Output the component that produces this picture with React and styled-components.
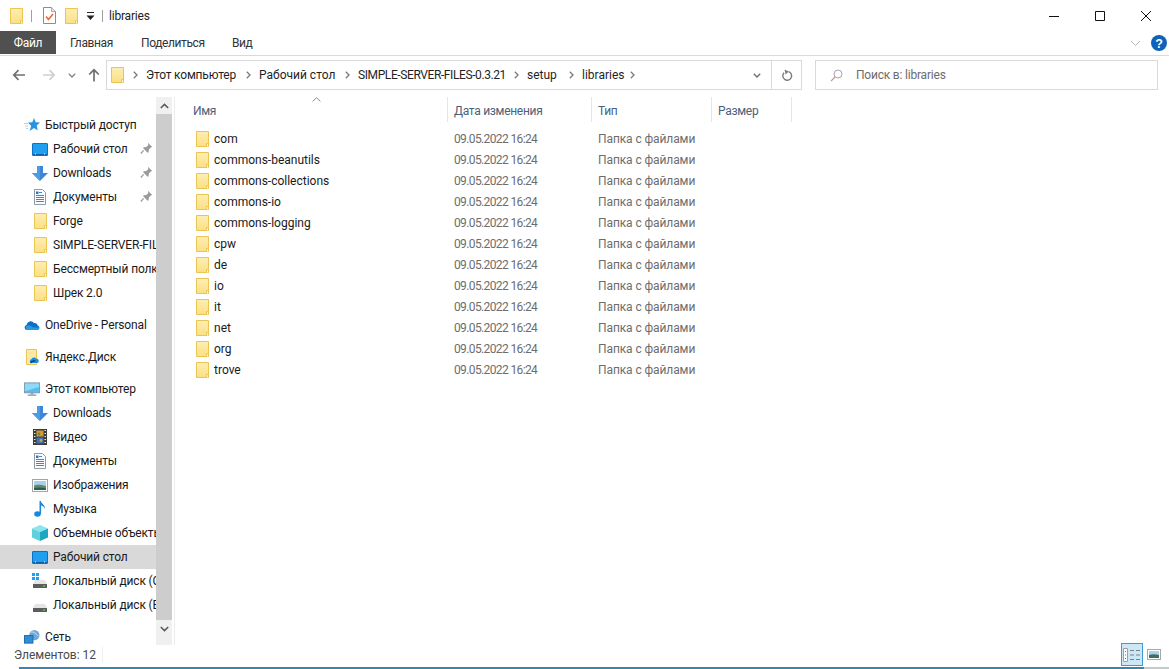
import React from "react";
import styled, { createGlobalStyle } from "styled-components";

const GlobalStyle = createGlobalStyle`
  html, body {
    margin: 0;
    padding: 0;
    background: #fff;
    overflow: hidden;
  }
  body {
    font-family: Roboto, "Open Sans", "Liberation Sans", sans-serif;
    font-size: 12px;
    color: #1a1a1a;
  }
`;

const Window = styled.div`
  width: 1169px;
  height: 669px;
  display: flex;
  flex-direction: column;
  overflow: hidden;
`;

const TitleBar = styled.div`
  height: 31px;
  display: flex;
  align-items: center;
  padding-left: 8px;
`;

const QuickItem = styled.div`
  display: flex;
  margin-left: ${(p) => p.$ml || 0}px;
`;

const QuickDivider = styled.div`
  width: 1px;
  height: 12px;
  background: #a0a0a0;
  margin-left: 7px;
`;

const TitleText = styled.div`
  flex: 1;
  margin-left: 6px;
  letter-spacing: -0.2px;
  color: #222;
`;

const WindowButton = styled.div`
  width: 46px;
  height: 31px;
  display: flex;
  align-items: center;
  justify-content: center;
`;

const Ribbon = styled.div`
  height: 24px;
  display: flex;
  align-items: stretch;
  border-bottom: 1px solid #dadada;
`;

const FileTab = styled.div`
  width: 56px;
  height: 23px;
  background: #505050;
  color: #fff;
  letter-spacing: -0.3px;
  display: flex;
  align-items: center;
  justify-content: center;
`;

const RibbonTab = styled.div`
  display: flex;
  align-items: center;
  margin-left: ${(p) => p.$gap}px;
  width: ${(p) => p.$w}px;
  color: #333;
  letter-spacing: -0.4px;
  white-space: nowrap;
`;

const RibbonEnd = styled.div`
  margin-left: auto;
  padding-right: 2px;
  display: flex;
  align-items: center;
  gap: 10px;
`;

const AddressRow = styled.div`
  height: 41px;
  box-sizing: border-box;
  padding-top: 4px;
  flex: none;
  display: flex;
  align-items: flex-start;
`;

const NavGroup = styled.div`
  width: 106px;
  height: 30px;
  display: flex;
  align-items: center;
  padding-left: 12px;
  box-sizing: border-box;
`;

const NavSlot = styled.div`
  width: ${(p) => p.$w}px;
  display: flex;
  justify-content: center;
`;

const AddressBox = styled.div`
  width: 696px;
  height: 30px;
  box-sizing: border-box;
  border: 1px solid #d9d9d9;
  display: flex;
  align-items: center;
  padding-left: 2px;
`;

const Crumb = styled.span`
  color: #1f1f1f;
  white-space: nowrap;
  width: ${(p) => p.$w}px;
  letter-spacing: ${(p) => p.$spacing}px;
`;

const CrumbArrow = styled.span`
  display: flex;
  width: ${(p) => p.$w || 21}px;
  justify-content: center;
`;

const AddressSpacer = styled.div`
  flex: 1;
`;

const AddressButton = styled.div`
  width: 29px;
  height: 28px;
  display: flex;
  align-items: center;
  justify-content: center;
  border-left: ${(p) => (p.$divided ? "1px solid #d9d9d9" : "none")};
`;

const SearchBox = styled.div`
  width: 343px;
  height: 30px;
  margin-left: 13px;
  box-sizing: border-box;
  border: 1px solid #d9d9d9;
  display: flex;
  align-items: center;
  gap: 13px;
  padding-left: 14px;
  color: #6d6d6d;
  letter-spacing: -0.2px;
`;

const Main = styled.div`
  height: 548px;
  display: flex;
  flex: none;
`;

const Sidebar = styled.div`
  width: 175px;
  flex: none;
  display: flex;
  box-sizing: border-box;
  border-right: 1px solid #ececec;
  overflow: hidden;
`;

const NavList = styled.div`
  width: 156px;
  flex: none;
  padding-top: 16px;
  overflow: hidden;
`;

const NavSection = styled.div`
  margin-bottom: 8px;
`;

const NavRow = styled.div`
  height: 24px;
  display: flex;
  align-items: center;
  position: relative;
  padding-left: ${(p) => (p.$sub ? 32 : 24)}px;
  background: ${(p) => (p.$selected ? "#d9d9d9" : "transparent")};
  white-space: nowrap;
  overflow: hidden;
`;

const NavIcon = styled.span`
  width: 16px;
  height: 16px;
  flex: none;
  margin-right: 5px;
  display: flex;
  align-items: center;
  justify-content: center;
`;

const NavText = styled.span`
  color: #1a1a1a;
  letter-spacing: -0.15px;
`;

const PinSlot = styled.span`
  position: absolute;
  left: 140px;
  top: 5px;
  display: flex;
`;

const Scrollbar = styled.div`
  width: 16px;
  height: 548px;
  flex: none;
  background: #f0f0f0;
  display: flex;
  flex-direction: column;
`;

const ScrollButton = styled.div`
  height: 17px;
  flex: none;
  display: flex;
  align-items: center;
  justify-content: center;
`;

const ScrollThumb = styled.div`
  height: 506px;
  flex: none;
  background: #cdcdcd;
`;

const Content = styled.div`
  flex: 1;
  padding-left: 12px;
`;

const HeaderRow = styled.div`
  height: 25px;
  display: flex;
  position: relative;
`;

const SortMark = styled.span`
  position: absolute;
  left: 125px;
  top: 0;
  display: flex;
`;

const HeaderCell = styled.div`
  width: ${(p) => p.$w}px;
  height: 25px;
  box-sizing: border-box;
  padding: 2px 0 0 6px;
  display: flex;
  align-items: center;
  color: #4c607a;
  letter-spacing: -0.3px;
  border-right: 1px solid #e5e5e5;
`;

const FileList = styled.div`
  padding-top: 6px;
`;

const FileRow = styled.div`
  height: 21px;
  display: flex;
  align-items: center;
`;

const NameCell = styled.div`
  width: 261px;
  display: flex;
  align-items: center;
  padding-left: 7px;
  box-sizing: border-box;
  color: #1a1a1a;
  gap: 4px;
`;

const DetailCell = styled.div`
  width: ${(p) => p.$w}px;
  padding-left: 6px;
  box-sizing: border-box;
  color: #6d6d6d;
  letter-spacing: ${(p) => p.$spacing}px;
`;

const StatusBar = styled.div`
  height: 22px;
  flex: none;
  display: flex;
  align-items: center;
  position: relative;
  top: -1px;
`;

const StatusText = styled.div`
  width: 88px;
  padding-left: 14px;
  color: #4a4a4a;
  height: 16px;
  line-height: 16px;
  border-right: 1px solid #eee;
`;

const ViewButtons = styled.div`
  margin: -1px 0 0 auto;
  display: flex;
  align-items: center;
  padding-right: 8px;
  gap: 4px;
`;

const ViewButton = styled.div`
  width: ${(p) => (p.$active ? 22 : 14)}px;
  height: 23px;
  box-sizing: border-box;
  display: flex;
  align-items: center;
  justify-content: center;
  background: ${(p) => (p.$active ? "#cce8f7" : "transparent")};
  border: ${(p) => (p.$active ? "1px solid #3b9ad8" : "none")};
`;

const TaskStrip = styled.div`
  height: 2px;
  flex: none;
  display: flex;
  margin-left: 19px;
`;

const TaskBlue = styled.div`
  flex: 1;
  background: #3a84ad;
`;

const TaskGray = styled.div`
  width: 25px;
  background: #c8c8c8;
`;

const FolderIcon = () => (
  <svg width="16" height="16" viewBox="0 0 16 16">
    <defs>
      <linearGradient id="fold" x1="0" y1="0" x2="0" y2="1">
        <stop offset="0" stopColor="#fdeeb4" />
        <stop offset="1" stopColor="#fbdf83" />
      </linearGradient>
    </defs>
    <path d="M2.5.5h12v15h-12z" fill="url(#fold)" stroke="#ecc451" />
    <path d="M12.5 15.5v-3h2v3" fill="#fff6d6" stroke="#ecc451" />
  </svg>
);

const ChecklistIcon = () => (
  <svg width="13" height="17" viewBox="0 0 13 17">
    <path d="M.5.5h8l4 4v12H.5z" fill="#fff" stroke="#8c8c8c" />
    <path d="M8.5.5v4h4" fill="#e8e8e8" stroke="#a8a8a8" />
    <path d="M3 9.5l2.5 3L10 7" fill="none" stroke="#ee6a32" strokeWidth="1.6" />
  </svg>
);

const QuickDropdown = () => (
  <svg width="9" height="10" viewBox="0 0 9 10">
    <path d="M1 1.5h7" stroke="#222" />
    <path d="M.5 4.5h8L4.5 9z" fill="#222" />
  </svg>
);

const Minimize = () => (
  <svg width="10" height="10" viewBox="0 0 10 10">
    <path d="M0 5.5h10" stroke="#111" />
  </svg>
);

const Maximize = () => (
  <svg width="10" height="10" viewBox="0 0 10 10">
    <path d="M.5.5h9v9h-9z" fill="none" stroke="#111" />
  </svg>
);

const CloseIcon = () => (
  <svg width="10" height="10" viewBox="0 0 10 10">
    <path d="M0 0l10 10M10 0L0 10" stroke="#111" strokeWidth="1" />
  </svg>
);

const RibbonChevron = () => (
  <svg width="11" height="7" viewBox="0 0 11 7">
    <path d="M1 1l4.5 4.5L10 1" fill="none" stroke="#b4b4b4" />
  </svg>
);

const HelpIcon = () => (
  <svg width="16" height="16" viewBox="0 0 16 16">
    <circle cx="8" cy="8" r="8" fill="#0e63b8" />
    <text x="8" y="12.5" textAnchor="middle" fontSize="12.5" fontWeight="700" fill="#fff" fontFamily="Liberation Sans, sans-serif">?</text>
  </svg>
);

const ArrowLeft = ({ color }) => (
  <svg width="14" height="12" viewBox="0 0 14 12">
    <path d="M13 6H2M6.5 1.2L1.8 6l4.7 4.8" fill="none" stroke={color} strokeWidth="1.7" />
  </svg>
);

const ArrowRight = ({ color }) => (
  <svg width="14" height="12" viewBox="0 0 14 12">
    <path d="M1 6h11M7.5 1.2L12.2 6l-4.7 4.8" fill="none" stroke={color} strokeWidth="1.7" />
  </svg>
);

const ArrowUp = () => (
  <svg width="12" height="14" viewBox="0 0 12 14">
    <path d="M6 13.5V2M1.2 6.5L6 1.8l4.8 4.7" fill="none" stroke="#6f6f6f" strokeWidth="1.7" />
  </svg>
);

const SmallChevron = ({ color = "#888" }) => (
  <svg width="8" height="5" viewBox="0 0 8 5">
    <path d="M.8.8L4 4l3.2-3.2" fill="none" stroke={color} strokeWidth="1.4" />
  </svg>
);

const CrumbChevron = () => (
  <svg width="5" height="8" viewBox="0 0 5 8">
    <path d="M.8.8L4 4 .8 7.2" fill="none" stroke="#7a7a7a" strokeWidth="1.3" />
  </svg>
);

const RefreshIcon = () => (
  <svg width="12" height="13" viewBox="0 0 12 13">
    <path d="M7.5 2.6A4.4 4.4 0 1 1 3 3.8" fill="none" stroke="#7c7c7c" strokeWidth="1.4" />
    <path d="M3.6.6l4 2-3 2.8z" fill="#7c7c7c" />
  </svg>
);

const SearchIcon = () => (
  <svg width="13" height="13" viewBox="0 0 13 13">
    <circle cx="8" cy="5" r="4" fill="none" stroke="#a9a3b3" />
    <path d="M5 8l-4 4.2" stroke="#c09a8a" strokeWidth="1.2" />
  </svg>
);

const SortUp = () => (
  <svg width="9" height="5" viewBox="0 0 9 5">
    <path d="M.6 4.4L4.5.8l3.9 3.6" fill="none" stroke="#8a8a8a" />
  </svg>
);

const StarIcon = () => (
  <svg width="16" height="16" viewBox="0 0 16 16">
    <path d="M0 6.5h4M1 9h3M2 11.5h2" stroke="#a8d4f2" />
    <path d="M10 1l1.7 4.2 4.3.3-3.3 2.9 1 5L10 10.9 5.6 14l1.6-5.1-3.2-3.4 4.3-.3z" fill="#2a93e0" />
  </svg>
);

const DesktopIcon = () => (
  <svg width="16" height="13" viewBox="0 0 16 13">
    <rect x=".5" y=".5" width="15" height="12" rx=".5" fill="#1e9ff0" stroke="#0f6fc0" />
    <path d="M1 11h14v1H1z" fill="#0d5ea8" />
    <path d="M3 11h1M12 11h1" stroke="#e6f5ff" />
  </svg>
);

const DownloadIcon = () => (
  <svg width="16" height="15" viewBox="0 0 16 15">
    <path d="M5 0h6v7h5l-8 8-8-8h5z" fill="#3c87d6" />
    <path d="M5 0h3v15L0 7h5z" fill="#4f9ae4" />
  </svg>
);

const DocsIcon = () => (
  <svg width="14" height="16" viewBox="0 0 14 16">
    <path d="M1.5.5h8l3 3v12h-11z" fill="#fafcff" stroke="#8f9aa6" />
    <path d="M6 3.5h3M3 6.5h8M3 8.5h8M3 10.5h8M3 12.5h8" stroke="#2f8fd6" />
    <rect x="3" y="2.5" width="2.5" height="2.5" fill="#3a6fb0" />
  </svg>
);

const PinIcon = () => (
  <svg width="13" height="13" viewBox="0 0 13 13">
    <path d="M8 .8l4.2 4.2-1.3.6-2 2-.3 2.6-1 .5-4.4-4.4.5-1 2.6-.3 2-2z" fill="#9b9b9b" />
    <path d="M3.7 8.3L.8 11.5" stroke="#9b9b9b" strokeWidth="1.2" />
  </svg>
);

const OneDriveIcon = () => (
  <svg width="16" height="10" viewBox="0 0 16 10">
    <path d="M3 10a2.6 2.6 0 0 1-.5-5.1A4.2 4.2 0 0 1 10 3a3 3 0 0 1 3.7 2.6A2.3 2.3 0 0 1 13.6 10z" fill="#0f6fc6" />
    <path d="M3 10a2.5 2.5 0 0 1 1-4.7C6 5 8 7 10 7.4l5.6.2A2.3 2.3 0 0 1 13.6 10z" fill="#2a9ae0" />
  </svg>
);

const YandexIcon = () => (
  <svg width="16" height="16" viewBox="0 0 16 16">
    <path d="M2.5.5h10v15h-10z" fill="#fde9a4" stroke="#ecc451" />
    <path d="M7 14a2 2 0 0 1 .3-3.8 3 3 0 0 1 5.2-.4 2.2 2.2 0 0 1 2.3 2.2 2 2 0 0 1-1.5 2z" fill="#1e8de0" />
    <path d="M6.5 14c1-2 3-2.5 5-2" fill="none" stroke="#12325c" strokeWidth="1.2" />
  </svg>
);

const ComputerIcon = () => (
  <svg width="17" height="15" viewBox="0 0 17 15">
    <rect x=".5" y=".5" width="16" height="10.5" fill="#54bdf2" stroke="#7a98ab" />
    <path d="M1 1h15v4C10 6 6 8 1 9z" fill="#8fd8f8" />
    <path d="M7 11h3v2H7z" fill="#9aa9b3" />
    <path d="M4 13.5h9" stroke="#8b9aa5" strokeWidth="1.4" />
  </svg>
);

const VideoIcon = () => (
  <svg width="14" height="16" viewBox="0 0 14 16">
    <rect width="14" height="16" fill="#3c3c3c" />
    <path d="M1 1.5h1.5M1 4.5h1.5M1 7.5h1.5M1 10.5h1.5M1 13.5h1.5M11.5 1.5H13M11.5 4.5H13M11.5 7.5H13M11.5 10.5H13M11.5 13.5H13" stroke="#e8e8e8" />
    <rect x="3.5" y="1.5" width="7" height="6" fill="#d39a2c" />
    <rect x="3.5" y="8.5" width="7" height="6" fill="#3f72b8" />
    <circle cx="6" cy="5" r="1.4" fill="#6c8b3a" />
    <circle cx="8" cy="11.5" r="1.4" fill="#d3a23c" />
  </svg>
);

const PicturesIcon = () => (
  <svg width="16" height="13" viewBox="0 0 16 13">
    <rect x=".5" y=".5" width="15" height="12" fill="#fff" stroke="#a5a5a5" />
    <rect x="2" y="2" width="12" height="9" fill="#a8d2ea" />
    <path d="M2 7c3-2 6-1 12 0v4H2z" fill="#5d8a6c" />
    <path d="M2 9c4-1 8-.5 12 .5V11H2z" fill="#2f5d4c" />
  </svg>
);

const MusicIcon = () => (
  <svg width="12" height="16" viewBox="0 0 12 16">
    <ellipse cx="3.5" cy="13" rx="3.3" ry="2.7" fill="#1787e0" />
    <path d="M5.5 13V0h1.4c.3 3 4.6 3.6 4 8-.6-2.2-2.6-3.2-3.8-3.4V13z" fill="#1787e0" />
  </svg>
);

const ObjectsIcon = () => (
  <svg width="16" height="16" viewBox="0 0 16 16">
    <path d="M8 0l8 3.5L8 7 0 3.5z" fill="#8de4ea" />
    <path d="M0 3.5L8 7v9l-8-3.5z" fill="#5fd0dc" />
    <path d="M16 3.5L8 7v9l8-3.5z" fill="#1fa6c0" />
  </svg>
);

const DriveIcon = ({ windows }) => (
  <svg width="16" height="16" viewBox="0 0 16 16">
    {windows && <path d="M0 0h3v3H0zM4 0h3v3H4zM0 4h3v3H0zM4 4h3v3H4z" fill="#1ea0ee" />}
    <path d="M3 7h10l2 4H1z" fill="#e4e4e4" />
    <rect x="1" y="11" width="14" height="4" fill="#5c5c5c" />
    <rect x="11" y="12.5" width="2" height="1.2" fill="#5fd35f" />
  </svg>
);

const NetworkIcon = () => (
  <svg width="17" height="16" viewBox="0 0 17 16">
    <circle cx="11" cy="6" r="5.5" fill="#6fa9d6" />
    <path d="M7 3c2-1 5 0 8 4" fill="none" stroke="#c5e0f2" />
    <rect x=".5" y="6.5" width="9" height="8" fill="#2f8ed8" stroke="#1868ad" />
  </svg>
);

const DetailsViewIcon = () => (
  <svg width="18" height="14" viewBox="0 0 18 14">
    <path d="M.5.5h4v13h-4z" fill="#fff" stroke="#a0a0a0" />
    <path d="M2 3h1v1H2zM2 6.5h1v1H2z" fill="#4a7ab0" />
    <path d="M2 10h1v1H2z" fill="#c04040" />
    <path d="M7 2.5h4M13 2.5h4M7 7h4M13 7h4M7 11.5h4M13 11.5h4" stroke="#808080" />
  </svg>
);

const ThumbViewIcon = () => (
  <svg width="14" height="11" viewBox="0 0 14 11">
    <rect x=".5" y=".5" width="13" height="10" fill="#fff" stroke="#a8a8a8" />
    <rect x="2" y="2" width="10" height="7" fill="#a8d2ea" />
    <path d="M2 6c3-1 6-1 10 0v3H2z" fill="#3f6f58" />
  </svg>
);

const navGroups = [
  [
    { label: "Быстрый доступ", icon: <StarIcon /> },
    { label: "Рабочий стол", icon: <DesktopIcon />, sub: true, pin: true },
    { label: "Downloads", icon: <DownloadIcon />, sub: true, pin: true },
    { label: "Документы", icon: <DocsIcon />, sub: true, pin: true },
    { label: "Forge", icon: <FolderIcon />, sub: true },
    { label: "SIMPLE-SERVER-FILES-0.3.21", icon: <FolderIcon />, sub: true },
    { label: "Бессмертный полк", icon: <FolderIcon />, sub: true },
    { label: "Шрек 2.0", icon: <FolderIcon />, sub: true },
  ],
  [{ label: "OneDrive - Personal", icon: <OneDriveIcon /> }],
  [{ label: "Яндекс.Диск", icon: <YandexIcon /> }],
  [
    { label: "Этот компьютер", icon: <ComputerIcon /> },
    { label: "Downloads", icon: <DownloadIcon />, sub: true },
    { label: "Видео", icon: <VideoIcon />, sub: true },
    { label: "Документы", icon: <DocsIcon />, sub: true },
    { label: "Изображения", icon: <PicturesIcon />, sub: true },
    { label: "Музыка", icon: <MusicIcon />, sub: true },
    { label: "Объемные объекты", icon: <ObjectsIcon />, sub: true },
    { label: "Рабочий стол", icon: <DesktopIcon />, sub: true, selected: true },
    { label: "Локальный диск (C:)", icon: <DriveIcon windows />, sub: true },
    { label: "Локальный диск (E:)", icon: <DriveIcon />, sub: true },
  ],
  [{ label: "Сеть", icon: <NetworkIcon /> }],
];

// widths keep each crumb on the column it has in the address bar
const crumbs = [
  { label: "Этот компьютер", width: 92, spacing: -0.2 },
  { label: "Рабочий стол", width: 78, spacing: 0 },
  { label: "SIMPLE-SERVER-FILES-0.3.21", width: 148, spacing: -0.4 },
  { label: "setup", width: 34, spacing: 0 },
  { label: "libraries", width: 40, spacing: 0 },
];

const folders = [
  "com",
  "commons-beanutils",
  "commons-collections",
  "commons-io",
  "commons-logging",
  "cpw",
  "de",
  "io",
  "it",
  "net",
  "org",
  "trove",
];

const App = () => (
  <Window>
    <GlobalStyle />
    <TitleBar>
      <FolderIcon />
      <QuickDivider />
      <QuickItem $ml={11}><ChecklistIcon /></QuickItem>
      <QuickItem $ml={7}><FolderIcon /></QuickItem>
      <QuickItem $ml={7}><QuickDropdown /></QuickItem>
      <QuickDivider />
      <TitleText>libraries</TitleText>
      <WindowButton><Minimize /></WindowButton>
      <WindowButton><Maximize /></WindowButton>
      <WindowButton><CloseIcon /></WindowButton>
    </TitleBar>
    <Ribbon>
      <FileTab>Файл</FileTab>
      <RibbonTab $gap={14} $w={71}>Главная</RibbonTab>
      <RibbonTab $gap={0} $w={91}>Поделиться</RibbonTab>
      <RibbonTab $gap={0} $w={30}>Вид</RibbonTab>
      <RibbonEnd>
        <RibbonChevron />
        <HelpIcon />
      </RibbonEnd>
    </Ribbon>
    <AddressRow>
      <NavGroup>
        <ArrowLeft color="#6f6f6f" />
        <NavSlot $w={16} />
        <ArrowRight color="#cfcfcf" />
        <NavSlot $w={32}><SmallChevron /></NavSlot>
        <ArrowUp />
      </NavGroup>
      <AddressBox>
        <FolderIcon />
        <CrumbArrow $w={21}><CrumbChevron /></CrumbArrow>
        {crumbs.map((c) => (
          <React.Fragment key={c.label}>
            <Crumb $w={c.width} $spacing={c.spacing}>{c.label}</Crumb>
            <CrumbArrow><CrumbChevron /></CrumbArrow>
          </React.Fragment>
        ))}
        <AddressSpacer />
        <AddressButton><SmallChevron color="#6f6f6f" /></AddressButton>
        <AddressButton $divided><RefreshIcon /></AddressButton>
      </AddressBox>
      <SearchBox>
        <SearchIcon />
        Поиск в: libraries
      </SearchBox>
    </AddressRow>
    <Main>
      <Sidebar>
        <NavList>
          {navGroups.map((group, i) => (
            <NavSection key={i}>
              {group.map((item, j) => (
                <NavRow key={j} $sub={item.sub} $selected={item.selected}>
                  <NavIcon>{item.icon}</NavIcon>
                  <NavText>{item.label}</NavText>
                  {item.pin && <PinSlot><PinIcon /></PinSlot>}
                </NavRow>
              ))}
            </NavSection>
          ))}
        </NavList>
        <Scrollbar>
          <ScrollButton>
            <svg width="9" height="6" viewBox="0 0 9 6"><path d="M.8 5L4.5 1.4 8.2 5" fill="none" stroke="#555" strokeWidth="1.5" /></svg>
          </ScrollButton>
          <ScrollThumb />
          <ScrollButton>
            <svg width="9" height="6" viewBox="0 0 9 6"><path d="M.8 1L4.5 4.6 8.2 1" fill="none" stroke="#555" strokeWidth="1.5" /></svg>
          </ScrollButton>
        </Scrollbar>
      </Sidebar>
      <Content>
        <HeaderRow>
          <SortMark><SortUp /></SortMark>
          <HeaderCell $w={261}>Имя</HeaderCell>
          <HeaderCell $w={144}>Дата изменения</HeaderCell>
          <HeaderCell $w={120}>Тип</HeaderCell>
          <HeaderCell $w={80}>Размер</HeaderCell>
        </HeaderRow>
        <FileList>
          {folders.map((name) => (
            <FileRow key={name}>
              <NameCell>
                <FolderIcon />
                {name}
              </NameCell>
              <DetailCell $w={144} $spacing={-0.62}>09.05.2022 16:24</DetailCell>
              <DetailCell $w={120} $spacing={-0.1}>Папка с файлами</DetailCell>
            </FileRow>
          ))}
        </FileList>
      </Content>
    </Main>
    <StatusBar>
      <StatusText>Элементов: 12</StatusText>
      <ViewButtons>
        <ViewButton $active><DetailsViewIcon /></ViewButton>
        <ViewButton><ThumbViewIcon /></ViewButton>
      </ViewButtons>
    </StatusBar>
    <TaskStrip>
      <TaskBlue />
      <TaskGray />
    </TaskStrip>
  </Window>
);

export default App;
